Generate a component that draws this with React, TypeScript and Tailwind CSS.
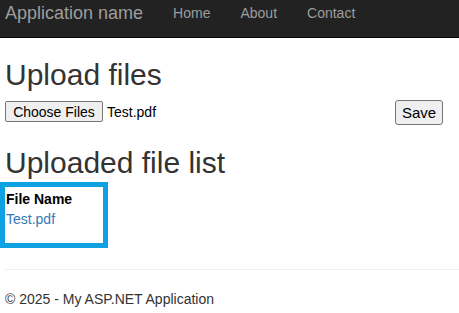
import React from 'react';

const App: React.FC = () => {
  return (
    <div className="min-h-[313px] bg-white text-[#333] text-[14px] leading-[20px]" style={{ fontFamily: '"Liberation Sans", Arial, sans-serif' }}>
      {/* Navbar */}
      <nav className="h-[38px] bg-[#222] border-b border-[#080808] flex items-start pt-[3px]">
        <span className="pl-[5px] pr-[15px] text-[18px] leading-[20px] text-[#9d9d9d]">Application name</span>
        <ul className="flex">
          <li className="px-[15px] text-[#9d9d9d]">Home</li>
          <li className="px-[15px] text-[#9d9d9d]">About</li>
          <li className="px-[15px] text-[#9d9d9d]">Contact</li>
        </ul>
      </nav>

      <main className="px-[5px]">
        <h2 className="mt-[20px] mb-[9px] text-[30px] leading-[33px]">Upload files</h2>

        <div className="flex items-start justify-between pr-[11px]">
          <div className="flex items-center gap-[4px] mt-[1px]">
            <button className="w-[98px] h-[21px] bg-[#efefef] border border-[#767676] rounded-[2px] text-[14px] leading-[18px] text-black">
              Choose Files
            </button>
            <span className="text-black">Test.pdf</span>
          </div>
          <button className="w-[48px] h-[25px] bg-[#efefef] border border-[#767676] rounded-[3px] text-[15px] leading-[20px] text-black">
            Save
          </button>
        </div>

        <h2 className="mt-[21px] mb-0 text-[30px] leading-[33px]">Uploaded file list</h2>

        {/* highlighted file table */}
        <div className="-ml-[5px] mt-[3px] w-[108px] h-[66px] border-[5px] border-[#0ea2e3] pl-[1px] pt-[2px]">
          <div className="font-bold text-black">File Name</div>
          <div className="text-[#337ab7]">Test.pdf</div>
        </div>

        <hr className="mt-[21px] -mr-[5px] border-0 border-t border-[#eee]" />

        <footer className="pt-[19px]">
          <p>© 2025 - My ASP.NET Application</p>
        </footer>
      </main>
    </div>
  );
};

export default App;
